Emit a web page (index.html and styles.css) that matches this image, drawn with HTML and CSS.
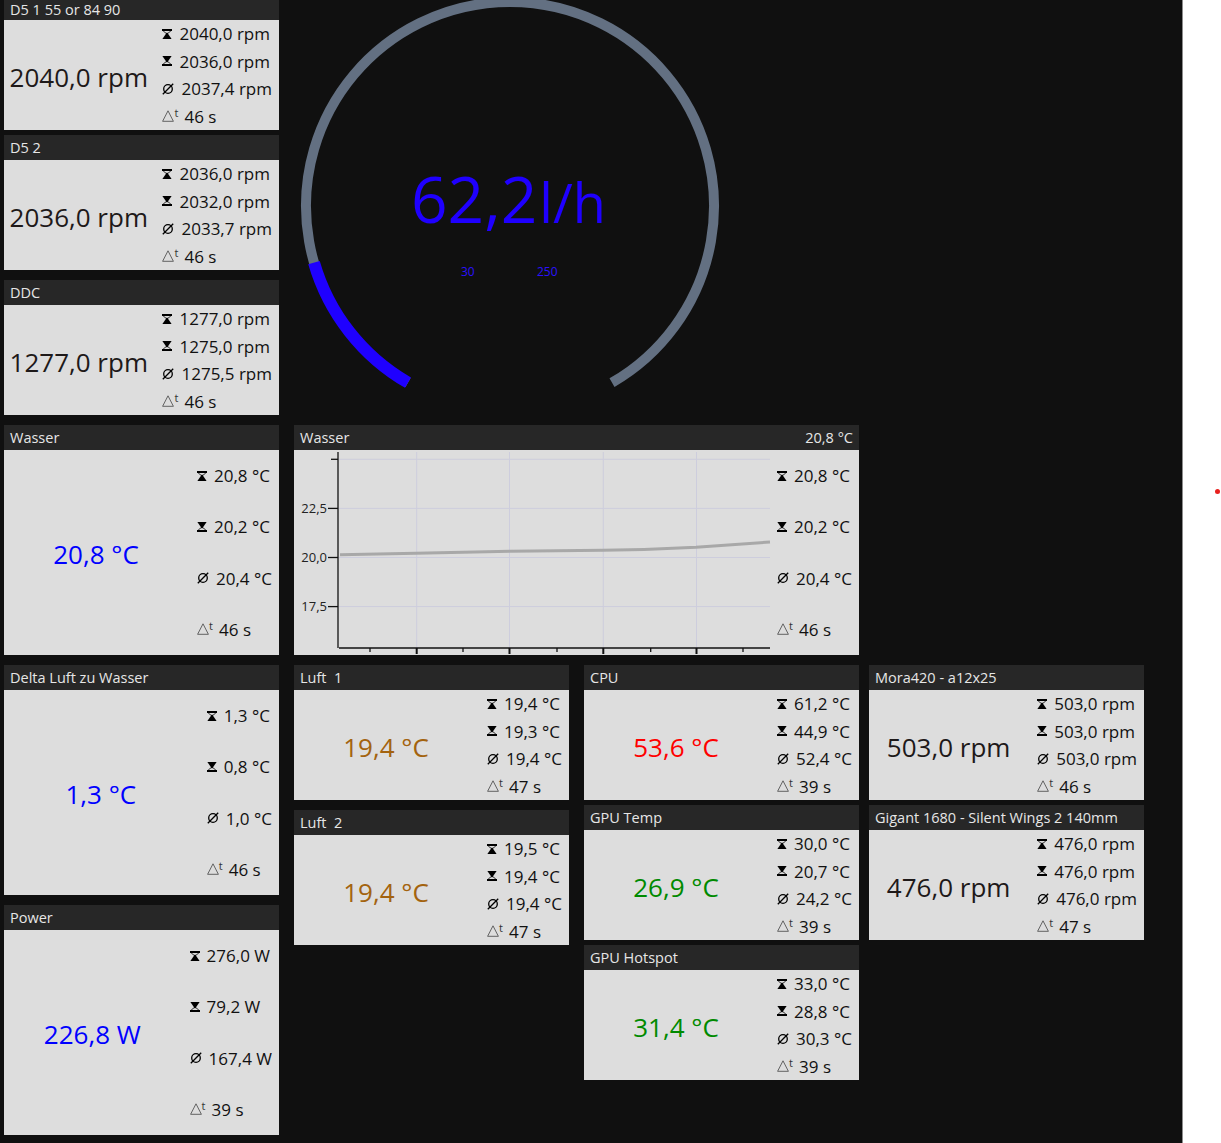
FILE: index.html
```html
<!DOCTYPE html>
<html lang="de">
    <head>
        <meta charset="UTF-8">
        <meta name="viewport" content="width=device-width, initial-scale=1.0">
        <title>Wasserkühlung Monitor</title>

        <link rel="stylesheet" href="styles.css">
    </head>
    <body>
        <!-- Symbole für Max / Min / Mittel / Zeit -->
        <svg class="defs" width="0" height="0">
            <symbol id="ico-max" viewBox="0 0 10 10">
                <rect x="0" y="0" width="10" height="2"/>
                <path d="M1.2 2 L5 5 L8.8 2" fill="none" stroke="currentColor" stroke-width="0.8"/>
                <path d="M5 3.2 L0.4 10 L9.6 10 Z"/>
            </symbol>
            <symbol id="ico-min" viewBox="0 0 10 10">
                <path d="M0.4 0 L9.6 0 L5 6.8 Z"/>
                <path d="M1.2 8 L5 5 L8.8 8" fill="none" stroke="currentColor" stroke-width="0.8"/>
                <rect x="0" y="8" width="10" height="2"/>
            </symbol>
            <symbol id="ico-avg" viewBox="0 0 12 12">
                <circle cx="6" cy="6" r="4.3" fill="none" stroke="currentColor" stroke-width="1.3"/>
                <path d="M0.8 11.2 L11.2 0.8" stroke="currentColor" stroke-width="1.3"/>
            </symbol>
            <symbol id="ico-dt" viewBox="0 0 12 12">
                <path d="M6 0.8 L11.4 11.3 L0.6 11.3 Z" fill="none" stroke="currentColor" stroke-width="0.9"/>
            </symbol>
        </svg>

        <div class="window">
            <div class="board">

                <div class="col">
                    <div class="card first">
                        <div class="card-head"><span>D5 1 55 or 84 90</span></div>
                        <div class="card-body">
                            <div class="value">2040,0 rpm</div>
                            <div class="stats">
                                <div class="stat"><svg class="ico"><use href="#ico-max"/></svg>2040,0 rpm</div>
                                <div class="stat"><svg class="ico"><use href="#ico-min"/></svg>2036,0 rpm</div>
                                <div class="stat"><svg class="ico avg"><use href="#ico-avg"/></svg>2037,4 rpm</div>
                                <div class="stat"><span class="dt"><svg class="ico"><use href="#ico-dt"/></svg><sup>t</sup></span>46 s</div>
                            </div>
                        </div>
                    </div>

                    <div class="card">
                        <div class="card-head"><span>D5 2</span></div>
                        <div class="card-body">
                            <div class="value">2036,0 rpm</div>
                            <div class="stats">
                                <div class="stat"><svg class="ico"><use href="#ico-max"/></svg>2036,0 rpm</div>
                                <div class="stat"><svg class="ico"><use href="#ico-min"/></svg>2032,0 rpm</div>
                                <div class="stat"><svg class="ico avg"><use href="#ico-avg"/></svg>2033,7 rpm</div>
                                <div class="stat"><span class="dt"><svg class="ico"><use href="#ico-dt"/></svg><sup>t</sup></span>46 s</div>
                            </div>
                        </div>
                    </div>

                    <div class="card">
                        <div class="card-head"><span>DDC</span></div>
                        <div class="card-body">
                            <div class="value">1277,0 rpm</div>
                            <div class="stats">
                                <div class="stat"><svg class="ico"><use href="#ico-max"/></svg>1277,0 rpm</div>
                                <div class="stat"><svg class="ico"><use href="#ico-min"/></svg>1275,0 rpm</div>
                                <div class="stat"><svg class="ico avg"><use href="#ico-avg"/></svg>1275,5 rpm</div>
                                <div class="stat"><span class="dt"><svg class="ico"><use href="#ico-dt"/></svg><sup>t</sup></span>46 s</div>
                            </div>
                        </div>
                    </div>

                    <div class="card tall">
                        <div class="card-head"><span>Wasser</span></div>
                        <div class="card-body">
                            <div class="value blue">20,8 °C</div>
                            <div class="stats">
                                <div class="stat"><svg class="ico"><use href="#ico-max"/></svg>20,8 °C</div>
                                <div class="stat"><svg class="ico"><use href="#ico-min"/></svg>20,2 °C</div>
                                <div class="stat"><svg class="ico avg"><use href="#ico-avg"/></svg>20,4 °C</div>
                                <div class="stat"><span class="dt"><svg class="ico"><use href="#ico-dt"/></svg><sup>t</sup></span>46 s</div>
                            </div>
                        </div>
                    </div>

                    <div class="card tall">
                        <div class="card-head"><span>Delta Luft zu Wasser</span></div>
                        <div class="card-body">
                            <div class="value blue">1,3 °C</div>
                            <div class="stats">
                                <div class="stat"><svg class="ico"><use href="#ico-max"/></svg>1,3 °C</div>
                                <div class="stat"><svg class="ico"><use href="#ico-min"/></svg>0,8 °C</div>
                                <div class="stat"><svg class="ico avg"><use href="#ico-avg"/></svg>1,0 °C</div>
                                <div class="stat"><span class="dt"><svg class="ico"><use href="#ico-dt"/></svg><sup>t</sup></span>46 s</div>
                            </div>
                        </div>
                    </div>

                    <div class="card tall">
                        <div class="card-head"><span>Power</span></div>
                        <div class="card-body">
                            <div class="value blue">226,8 W</div>
                            <div class="stats">
                                <div class="stat"><svg class="ico"><use href="#ico-max"/></svg>276,0 W</div>
                                <div class="stat"><svg class="ico"><use href="#ico-min"/></svg>79,2 W</div>
                                <div class="stat"><svg class="ico avg"><use href="#ico-avg"/></svg>167,4 W</div>
                                <div class="stat"><span class="dt"><svg class="ico"><use href="#ico-dt"/></svg><sup>t</sup></span>39 s</div>
                            </div>
                        </div>
                    </div>
                </div>

                <div class="main">

                    <!-- Durchfluss: 30..250 l/h über 300° -->
                    <div class="gauge">
                        <svg width="440" height="425" viewBox="0 5 440 425">
                            <path d="M114 387.67 A204 204 0 1 1 318 387.67" fill="none" stroke="#637082" stroke-width="10"/>
                            <path d="M114 387.67 A204 204 0 0 1 20 267.6" fill="none" stroke="#1f00ff" stroke-width="12"/>
                            <text class="flow" x="117" y="227.7">62,2<tspan class="flow-unit" dx="2">l/h</tspan></text>
                            <text class="flow-range" x="167" y="281">30</text>
                            <text class="flow-range" x="243" y="281">250</text>
                        </svg>
                    </div>

                    <div class="card chart">
                        <div class="card-head"><span>Wasser</span><span>20,8 °C</span></div>
                        <div class="card-body">
                            <svg class="plot" width="482" height="205" viewBox="0 0 482 205">
                                <g stroke="#cdcddd" stroke-width="1">
                                    <line x1="44" y1="9.3" x2="476" y2="9.3"/>
                                    <line x1="44" y1="58.4" x2="476" y2="58.4"/>
                                    <line x1="44" y1="107.5" x2="476" y2="107.5"/>
                                    <line x1="44" y1="156.6" x2="476" y2="156.6"/>
                                    <line x1="122.7" y1="2" x2="122.7" y2="198"/>
                                    <line x1="215.5" y1="2" x2="215.5" y2="198"/>
                                    <line x1="309.3" y1="2" x2="309.3" y2="198"/>
                                    <line x1="402.5" y1="2" x2="402.5" y2="198"/>
                                </g>
                                <g stroke="#111" stroke-width="1.3">
                                    <line x1="44" y1="2" x2="44" y2="198"/>
                                    <line x1="45" y1="198" x2="476" y2="198"/>
                                    <line x1="37" y1="9.3" x2="44" y2="9.3"/>
                                    <line x1="34" y1="58.4" x2="44" y2="58.4"/>
                                    <line x1="34" y1="107.5" x2="44" y2="107.5"/>
                                    <line x1="34" y1="156.6" x2="44" y2="156.6"/>
                                    <line x1="76" y1="198" x2="76" y2="202"/>
                                    <line x1="169" y1="198" x2="169" y2="202"/>
                                    <line x1="263" y1="198" x2="263" y2="202"/>
                                    <line x1="356.7" y1="198" x2="356.7" y2="202"/>
                                    <line x1="449" y1="198" x2="449" y2="202"/>
                                </g>
                                <g stroke="#111" stroke-width="2">
                                    <line x1="122.7" y1="198" x2="122.7" y2="204"/>
                                    <line x1="215.5" y1="198" x2="215.5" y2="204"/>
                                    <line x1="309.3" y1="198" x2="309.3" y2="204"/>
                                    <line x1="402.5" y1="198" x2="402.5" y2="204"/>
                                </g>
                                <g class="axis-label">
                                    <text x="33" y="63">22,5</text>
                                    <text x="33" y="112">20,0</text>
                                    <text x="33" y="161">17,5</text>
                                </g>
                                <polyline points="46,104.7 122,103.2 216,101.2 309,100.2 350,99.4 402,97.3 476,92" fill="none" stroke="#a8a8a8" stroke-width="3"/>
                            </svg>
                            <div class="stats">
                                <div class="stat"><svg class="ico"><use href="#ico-max"/></svg>20,8 °C</div>
                                <div class="stat"><svg class="ico"><use href="#ico-min"/></svg>20,2 °C</div>
                                <div class="stat"><svg class="ico avg"><use href="#ico-avg"/></svg>20,4 °C</div>
                                <div class="stat"><span class="dt"><svg class="ico"><use href="#ico-dt"/></svg><sup>t</sup></span>46 s</div>
                            </div>
                        </div>
                    </div>

                    <div class="lower">
                        <div class="col">
                            <div class="card">
                                <div class="card-head"><span>Luft&nbsp; 1</span></div>
                                <div class="card-body">
                                    <div class="value brown">19,4 °C</div>
                                    <div class="stats">
                                        <div class="stat"><svg class="ico"><use href="#ico-max"/></svg>19,4 °C</div>
                                        <div class="stat"><svg class="ico"><use href="#ico-min"/></svg>19,3 °C</div>
                                        <div class="stat"><svg class="ico avg"><use href="#ico-avg"/></svg>19,4 °C</div>
                                        <div class="stat"><span class="dt"><svg class="ico"><use href="#ico-dt"/></svg><sup>t</sup></span>47 s</div>
                                    </div>
                                </div>
                            </div>
                            <div class="card">
                                <div class="card-head"><span>Luft&nbsp; 2</span></div>
                                <div class="card-body">
                                    <div class="value brown">19,4 °C</div>
                                    <div class="stats">
                                        <div class="stat"><svg class="ico"><use href="#ico-max"/></svg>19,5 °C</div>
                                        <div class="stat"><svg class="ico"><use href="#ico-min"/></svg>19,4 °C</div>
                                        <div class="stat"><svg class="ico avg"><use href="#ico-avg"/></svg>19,4 °C</div>
                                        <div class="stat"><span class="dt"><svg class="ico"><use href="#ico-dt"/></svg><sup>t</sup></span>47 s</div>
                                    </div>
                                </div>
                            </div>
                        </div>

                        <div class="col tight">
                            <div class="card">
                                <div class="card-head"><span>CPU</span></div>
                                <div class="card-body">
                                    <div class="value red">53,6 °C</div>
                                    <div class="stats">
                                        <div class="stat"><svg class="ico"><use href="#ico-max"/></svg>61,2 °C</div>
                                        <div class="stat"><svg class="ico"><use href="#ico-min"/></svg>44,9 °C</div>
                                        <div class="stat"><svg class="ico avg"><use href="#ico-avg"/></svg>52,4 °C</div>
                                        <div class="stat"><span class="dt"><svg class="ico"><use href="#ico-dt"/></svg><sup>t</sup></span>39 s</div>
                                    </div>
                                </div>
                            </div>
                            <div class="card">
                                <div class="card-head"><span>GPU Temp</span></div>
                                <div class="card-body">
                                    <div class="value green">26,9 °C</div>
                                    <div class="stats">
                                        <div class="stat"><svg class="ico"><use href="#ico-max"/></svg>30,0 °C</div>
                                        <div class="stat"><svg class="ico"><use href="#ico-min"/></svg>20,7 °C</div>
                                        <div class="stat"><svg class="ico avg"><use href="#ico-avg"/></svg>24,2 °C</div>
                                        <div class="stat"><span class="dt"><svg class="ico"><use href="#ico-dt"/></svg><sup>t</sup></span>39 s</div>
                                    </div>
                                </div>
                            </div>
                            <div class="card">
                                <div class="card-head"><span>GPU Hotspot</span></div>
                                <div class="card-body">
                                    <div class="value green">31,4 °C</div>
                                    <div class="stats">
                                        <div class="stat"><svg class="ico"><use href="#ico-max"/></svg>33,0 °C</div>
                                        <div class="stat"><svg class="ico"><use href="#ico-min"/></svg>28,8 °C</div>
                                        <div class="stat"><svg class="ico avg"><use href="#ico-avg"/></svg>30,3 °C</div>
                                        <div class="stat"><span class="dt"><svg class="ico"><use href="#ico-dt"/></svg><sup>t</sup></span>39 s</div>
                                    </div>
                                </div>
                            </div>
                        </div>

                        <div class="col tight">
                            <div class="card">
                                <div class="card-head"><span>Mora420 - a12x25</span></div>
                                <div class="card-body">
                                    <div class="value">503,0 rpm</div>
                                    <div class="stats">
                                        <div class="stat"><svg class="ico"><use href="#ico-max"/></svg>503,0 rpm</div>
                                        <div class="stat"><svg class="ico"><use href="#ico-min"/></svg>503,0 rpm</div>
                                        <div class="stat"><svg class="ico avg"><use href="#ico-avg"/></svg>503,0 rpm</div>
                                        <div class="stat"><span class="dt"><svg class="ico"><use href="#ico-dt"/></svg><sup>t</sup></span>46 s</div>
                                    </div>
                                </div>
                            </div>
                            <div class="card">
                                <div class="card-head"><span>Gigant 1680 - Silent Wings 2 140mm</span></div>
                                <div class="card-body">
                                    <div class="value">476,0 rpm</div>
                                    <div class="stats">
                                        <div class="stat"><svg class="ico"><use href="#ico-max"/></svg>476,0 rpm</div>
                                        <div class="stat"><svg class="ico"><use href="#ico-min"/></svg>476,0 rpm</div>
                                        <div class="stat"><svg class="ico avg"><use href="#ico-avg"/></svg>476,0 rpm</div>
                                        <div class="stat"><span class="dt"><svg class="ico"><use href="#ico-dt"/></svg><sup>t</sup></span>47 s</div>
                                    </div>
                                </div>
                            </div>
                        </div>
                    </div>

                </div>
            </div>
        </div>

        <div class="marker"></div>
    </body>
</html>
```

FILE: styles.css
```css
html, body{
    margin: 0;
}
body{
    background-color: #ffffff;
    font-family: "Open Sans", "Noto Sans", sans-serif;
    color: #111111;
}
.defs{
    position: absolute;
}
.window{
    width: 1182px;
    height: 1143px;
    background-color: #101010;
    border-right: 1px solid #8c8c8c;
    overflow: hidden;
}
.board{
    display: flex;
    gap: 15px;
    padding-left: 4px;
}
.col{
    display: flex;
    flex-direction: column;
    gap: 10px;
    width: 275px;
}
.col.tight{
    gap: 5px;
}
.card.first{
    margin-bottom: -5px;
}
.card.first .card-head{
    height: 20px;
    line-height: 20px;
}

.card-head{
    height: 25px;
    line-height: 25px;
    background-color: #272727;
    color: #e6e6e6;
    font-size: 14.5px;
    padding: 0 6px;
    display: flex;
    justify-content: space-between;
    white-space: nowrap;
}
.card-body{
    height: 110px;
    background-color: #dddddd;
    display: flex;
}
.card.tall .card-body, .card.chart .card-body{
    height: 205px;
}
.value{
    flex: 1;
    display: flex;
    align-items: center;
    justify-content: center;
    padding: 3px 9px 0 0;
    font-size: 26px;
    color: #1e1919;
    white-space: nowrap;
}
.value.blue{
    color: #0000ff;
}
.value.brown{
    color: #a3630f;
}
.value.red{
    color: #ff0000;
}
.value.green{
    color: #008a00;
}
.stats{
    display: flex;
    flex-direction: column;
    padding-right: 7px;
    margin-left: auto;
}
.stat{
    flex: 1;
    display: flex;
    align-items: center;
    font-size: 17px;
    white-space: nowrap;
}
.ico{
    width: 10px;
    height: 10px;
    margin-right: 7px;
    color: #000000;
    fill: currentColor;
    flex: none;
}
.ico.avg{
    width: 12px;
    height: 12px;
    margin-right: 7px;
}
.dt{
    display: inline-flex;
    align-items: center;
    width: 22px;
    color: #333333;
}
.dt .ico{
    width: 12px;
    height: 12px;
    margin-right: 0;
    color: #555555;
}
.dt sup{
    font-size: 11px;
    line-height: 1;
    margin-top: -8px;
}

.main{
    display: flex;
    flex-direction: column;
    width: 850px;
}
.gauge{
    height: 425px;
}
.gauge svg{
    display: block;
}
.flow{
    font-family: "Open Sans", sans-serif;
    font-size: 64px;
    fill: #1f00ff;
}
.flow-unit{
    font-size: 54px;
}
.flow-range{
    font-family: "Open Sans", sans-serif;
    font-size: 12px;
    fill: #2a10ff;
}

.card.chart{
    width: 565px;
}
.plot{
    display: block;
    flex: none;
}
.axis-label text{
    font-family: "Open Sans", sans-serif;
    font-size: 13px;
    fill: #222222;
    text-anchor: end;
}

.lower{
    display: flex;
    gap: 15px;
    margin-top: 10px;
}
.lower .col:last-child{
    margin-left: -5px;
}

.marker{
    position: absolute;
    left: 1215px;
    top: 489px;
    width: 5px;
    height: 5px;
    border-radius: 50%;
    background-color: #e8201e;
}
```
